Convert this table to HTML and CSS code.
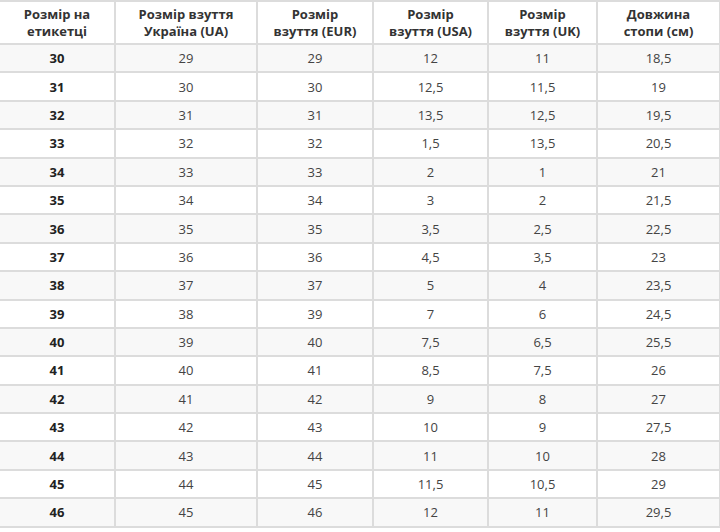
FILE: index.html
```html
<!DOCTYPE html>
<html lang="uk">
<head>
<meta charset="utf-8">
<link rel="stylesheet" href="styles.css">
</head>
<body>
<table class="sizes">
<colgroup>
<col class="c1"><col class="c2"><col class="c3"><col class="c4"><col class="c5"><col class="c6">
</colgroup>
<thead>
<tr><th>Розмір на<br>етикетці</th><th>Розмір взуття<br>Україна (UA)</th><th>Розмір<br>взуття (EUR)</th><th>Розмір<br>взуття (USA)</th><th>Розмір<br>взуття (UK)</th><th>Довжина<br>стопи (см)</th></tr>
</thead>
<tbody>
<tr><td>30</td><td>29</td><td>29</td><td>12</td><td>11</td><td>18,5</td></tr>
<tr><td>31</td><td>30</td><td>30</td><td>12,5</td><td>11,5</td><td>19</td></tr>
<tr><td>32</td><td>31</td><td>31</td><td>13,5</td><td>12,5</td><td>19,5</td></tr>
<tr><td>33</td><td>32</td><td>32</td><td>1,5</td><td>13,5</td><td>20,5</td></tr>
<tr><td>34</td><td>33</td><td>33</td><td>2</td><td>1</td><td>21</td></tr>
<tr><td>35</td><td>34</td><td>34</td><td>3</td><td>2</td><td>21,5</td></tr>
<tr><td>36</td><td>35</td><td>35</td><td>3,5</td><td>2,5</td><td>22,5</td></tr>
<tr><td>37</td><td>36</td><td>36</td><td>4,5</td><td>3,5</td><td>23</td></tr>
<tr><td>38</td><td>37</td><td>37</td><td>5</td><td>4</td><td>23,5</td></tr>
<tr><td>39</td><td>38</td><td>39</td><td>7</td><td>6</td><td>24,5</td></tr>
<tr><td>40</td><td>39</td><td>40</td><td>7,5</td><td>6,5</td><td>25,5</td></tr>
<tr><td>41</td><td>40</td><td>41</td><td>8,5</td><td>7,5</td><td>26</td></tr>
<tr><td>42</td><td>41</td><td>42</td><td>9</td><td>8</td><td>27</td></tr>
<tr><td>43</td><td>42</td><td>43</td><td>10</td><td>9</td><td>27,5</td></tr>
<tr><td>44</td><td>43</td><td>44</td><td>11</td><td>10</td><td>28</td></tr>
<tr><td>45</td><td>44</td><td>45</td><td>11,5</td><td>10,5</td><td>29</td></tr>
<tr><td>46</td><td>45</td><td>46</td><td>12</td><td>11</td><td>29,5</td></tr>
</tbody>
</table>
</body>
</html>
```
FILE: styles.css
```css
html, body {
  margin: 0;
  padding: 0;
  background: #fff;
}
body {
  font-family: "Open Sans", "Noto Sans", sans-serif;
  font-size: 13px;
  color: #444;
}
.sizes {
  border-collapse: collapse;
  table-layout: fixed;
  width: 720px;
}
.c1 { width: 115px; }
.c2 { width: 142px; }
.c3 { width: 116px; }
.c4 { width: 115px; }
.c5 { width: 109px; }
.c6 { width: 123px; }
.sizes th,
.sizes td {
  border: 2px solid #dcdcdc;
  text-align: center;
  padding: 0;
}
.sizes th:first-child,
.sizes td:first-child {
  border-left: none;
}
.sizes th {
  height: 41px;
  font-weight: 700;
  color: #333;
  line-height: 17px;
}
.sizes td {
  height: 26.4px;
  line-height: 16px;
}
.sizes td:first-child {
  font-weight: 700;
  color: #222;
}
.sizes tbody tr:nth-child(odd) td {
  background: #f8f8f8;
}
```
